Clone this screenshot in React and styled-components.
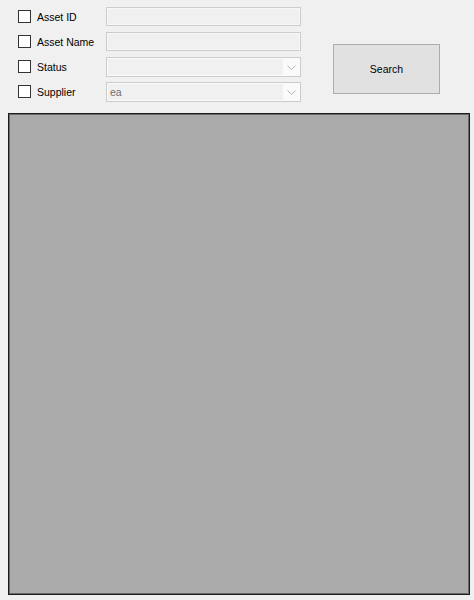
import styled, { createGlobalStyle } from 'styled-components'

const GlobalStyle = createGlobalStyle`
    html, body {
        margin: 0;
        padding: 0;
        background: #f0f0f0;
    }
`

const Page = styled.div`
    width: 474px;
    height: 600px;
    box-sizing: border-box;
    padding: 7px 4px 5px 8px;
    display: flex;
    flex-direction: column;
    gap: 11px;
    background: #f0f0f0;
    font-family: 'Liberation Sans', Arial, sans-serif;
    font-size: 10.5px;
    color: #000;
`

const Header = styled.div`
    display: flex;
    align-items: flex-start;
`

const Fields = styled.div`
    display: grid;
    grid-template-columns: 88px 195px;
    grid-auto-rows: 20px;
    row-gap: 5px;
    padding-left: 10px;
`

const CheckLabel = styled.label`
    display: flex;
    align-items: center;
    gap: 6px;
    margin-top: -1px;
`

const Box = styled.span`
    width: 13px;
    height: 13px;
    box-sizing: border-box;
    border: 1px solid #333;
    background: #fff;
`

const TextBox = styled.div`
    box-sizing: border-box;
    height: 19px;
    border: 1px solid #cccccc;
    background: #f0f0f0;
    box-shadow: inset 0 0 0 1px #f7f7f7;
`

const Combo = styled.div`
    box-sizing: border-box;
    height: 20px;
    border: 1px solid #cccccc;
    display: flex;
    background: #fafafa;
`

const ComboText = styled.div`
    flex: 1;
    display: flex;
    align-items: center;
    padding-left: 2px;
    margin: 1px 0 1px 1px;
    background: #f0f0f0;
    color: #6d6d6d;
`

const ComboArrow = styled.div`
    width: 17px;
    display: flex;
    align-items: center;
    justify-content: center;
`

const SearchButton = styled.button`
    margin: 37px 0 0 32px;
    width: 107px;
    height: 50px;
    box-sizing: border-box;
    border: 1px solid #adadad;
    background: #e1e1e1;
    font: inherit;
    color: #000;
    padding: 0;
`

const Grid = styled.div`
    flex: 1;
    box-sizing: border-box;
    border: 1px solid #1c1c1c;
    box-shadow: inset 0 0 0 1px #6a6a6a;
    background: #ababab;
`

function Chevron() {
    return (
        <svg width="9" height="5" viewBox="0 0 9 5">
            <path d="M0.5 0.5 L4.5 4.5 L8.5 0.5" fill="none" stroke="#b5b5b5" strokeWidth="1" />
        </svg>
    )
}

function Check({ text }) {
    return (
        <CheckLabel>
            <Box />
            {text}
        </CheckLabel>
    )
}

function Dropdown({ value }) {
    return (
        <Combo>
            <ComboText>{value}</ComboText>
            <ComboArrow>
                <Chevron />
            </ComboArrow>
        </Combo>
    )
}

export default function App() {
    return (
        <>
            <GlobalStyle />
            <Page>
                <Header>
                    <Fields>
                        <Check text="Asset ID" />
                        <TextBox />
                        <Check text="Asset Name" />
                        <TextBox />
                        <Check text="Status" />
                        <Dropdown value="" />
                        <Check text="Supplier" />
                        <Dropdown value="ea" />
                    </Fields>
                    <SearchButton>Search</SearchButton>
                </Header>
                <Grid />
            </Page>
        </>
    )
}
